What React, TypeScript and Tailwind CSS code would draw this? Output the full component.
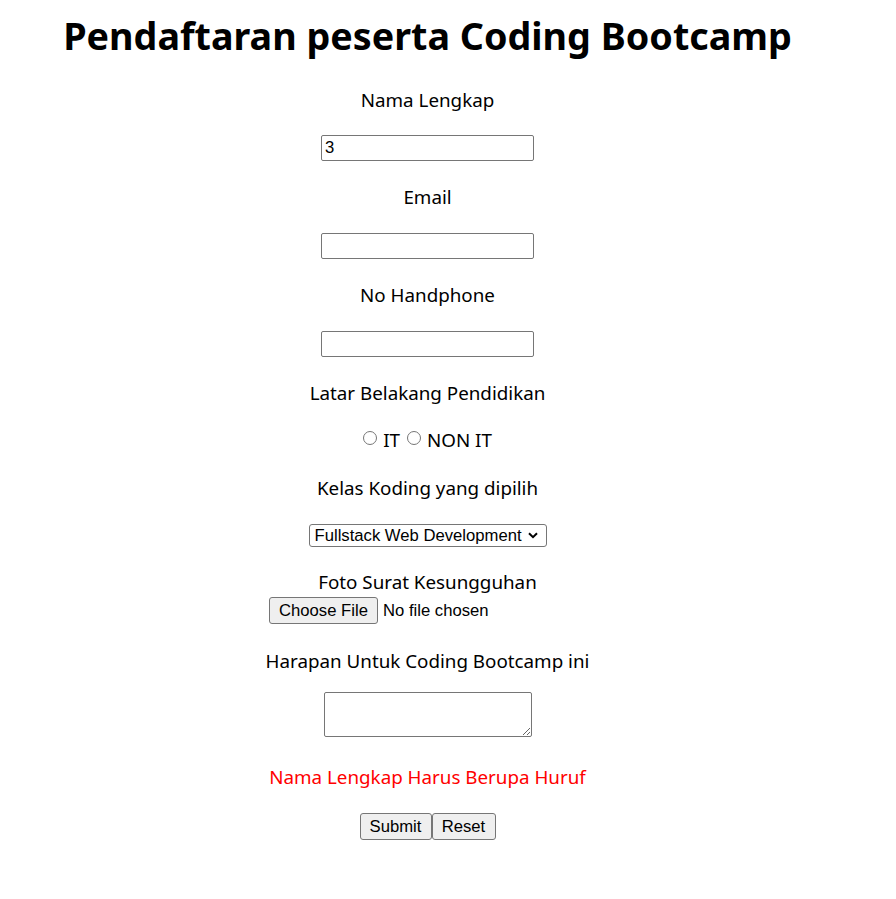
import { useState } from 'react';

const LABEL = "h-[24px] flex items-center text-[18.8px] whitespace-nowrap";
const INPUT = "w-[213px] h-[26px] border border-[#767676] rounded-[2px] px-[3px] text-[16.67px] text-black bg-white outline-none font-['Liberation_Sans',Arial,sans-serif]";
const RADIO = "appearance-none w-[14px] h-[14px] m-0 mb-[4px] rounded-full border border-[#767676] bg-white checked:border-[4px] checked:border-[#0075ff]";
const BTN = "h-[27px] border border-[#767676] rounded-[3px] bg-[#efefef]";

export default function App() {
  const [nama, setNama] = useState('3');
  const [pendidikan, setPendidikan] = useState('');

  return (
    <div className="w-[855px] min-h-[899px] bg-white text-black flex flex-col items-center font-['Noto_Sans',sans-serif]">
      <h1 className="mt-[12px] h-[48px] flex items-center text-[37.7px] font-bold whitespace-nowrap">
        Pendaftaran peserta Coding Bootcamp
      </h1>

      <form className="flex flex-col items-center" onSubmit={(e) => e.preventDefault()}>
        <label className={`mt-[28px] ${LABEL}`}>Nama Lengkap</label>
        <input className={`mt-[23px] ${INPUT}`} value={nama} onChange={(e) => setNama(e.target.value)} />

        <label className={`mt-[24px] ${LABEL}`}>Email</label>
        <input className={`mt-[24px] ${INPUT}`} />

        <label className={`mt-[24px] ${LABEL}`}>No Handphone</label>
        <input className={`mt-[24px] ${INPUT}`} />

        <label className={`mt-[24px] ${LABEL}`}>Latar Belakang Pendidikan</label>
        <div className={`mt-[23px] ${LABEL}`}>
          <input type="radio" name="pendidikan" className={RADIO} checked={pendidikan === 'IT'} onChange={() => setPendidikan('IT')} />
          <span className="ml-[6px] mr-[7px]">IT</span>
          <input type="radio" name="pendidikan" className={RADIO} checked={pendidikan === 'NON IT'} onChange={() => setPendidikan('NON IT')} />
          <span className="ml-[6px]">NON IT</span>
        </div>

        <label className={`mt-[24px] ${LABEL}`}>Kelas Koding yang dipilih</label>
        <div className="mt-[24px] relative">
          <select className="block appearance-none w-[238px] h-[23px] pl-[5px] border border-[#767676] rounded-[3px] bg-white text-[16.67px] leading-[21px] text-black font-['Liberation_Sans',Arial,sans-serif] outline-none">
            <option>Fullstack Web Development</option>
            <option>Data Science</option>
            <option>Mobile Development</option>
          </select>
          <svg className="absolute right-[9px] top-[8px] pointer-events-none" width="10" height="7" viewBox="0 0 10 7">
            <path d="M1 1.2 L5 5.2 L9 1.2" fill="none" stroke="#000" strokeWidth="2" />
          </svg>
        </div>

        <label className={`mt-[23px] ${LABEL}`}>Foto Surat Kesungguhan</label>
        <div className="mt-[3px] w-[317px] h-[27px] flex items-center gap-[5px] text-[16.67px] font-['Liberation_Sans',Arial,sans-serif]">
          <button type="button" className={`${BTN} w-[109px]`}>Choose File</button>
          <span>No file chosen</span>
        </div>

        <label className={`mt-[25px] ${LABEL}`}>Harapan Untuk Coding Bootcamp ini</label>
        <textarea className="block mt-[19px] w-[208px] h-[45px] border border-[#767676] rounded-[2px] bg-white text-[16.67px] outline-none" />

        <p className={`mt-[28px] ${LABEL} text-[#ff0000]`}>Nama Lengkap Harus Berupa Huruf</p>

        <div className="mt-[24px] flex font-['Liberation_Sans',Arial,sans-serif] text-[16.67px]">
          <button type="submit" className={`${BTN} w-[72px]`}>Submit</button>
          <button type="reset" className={`${BTN} w-[64px]`}>Reset</button>
        </div>
      </form>
    </div>
  );
}
